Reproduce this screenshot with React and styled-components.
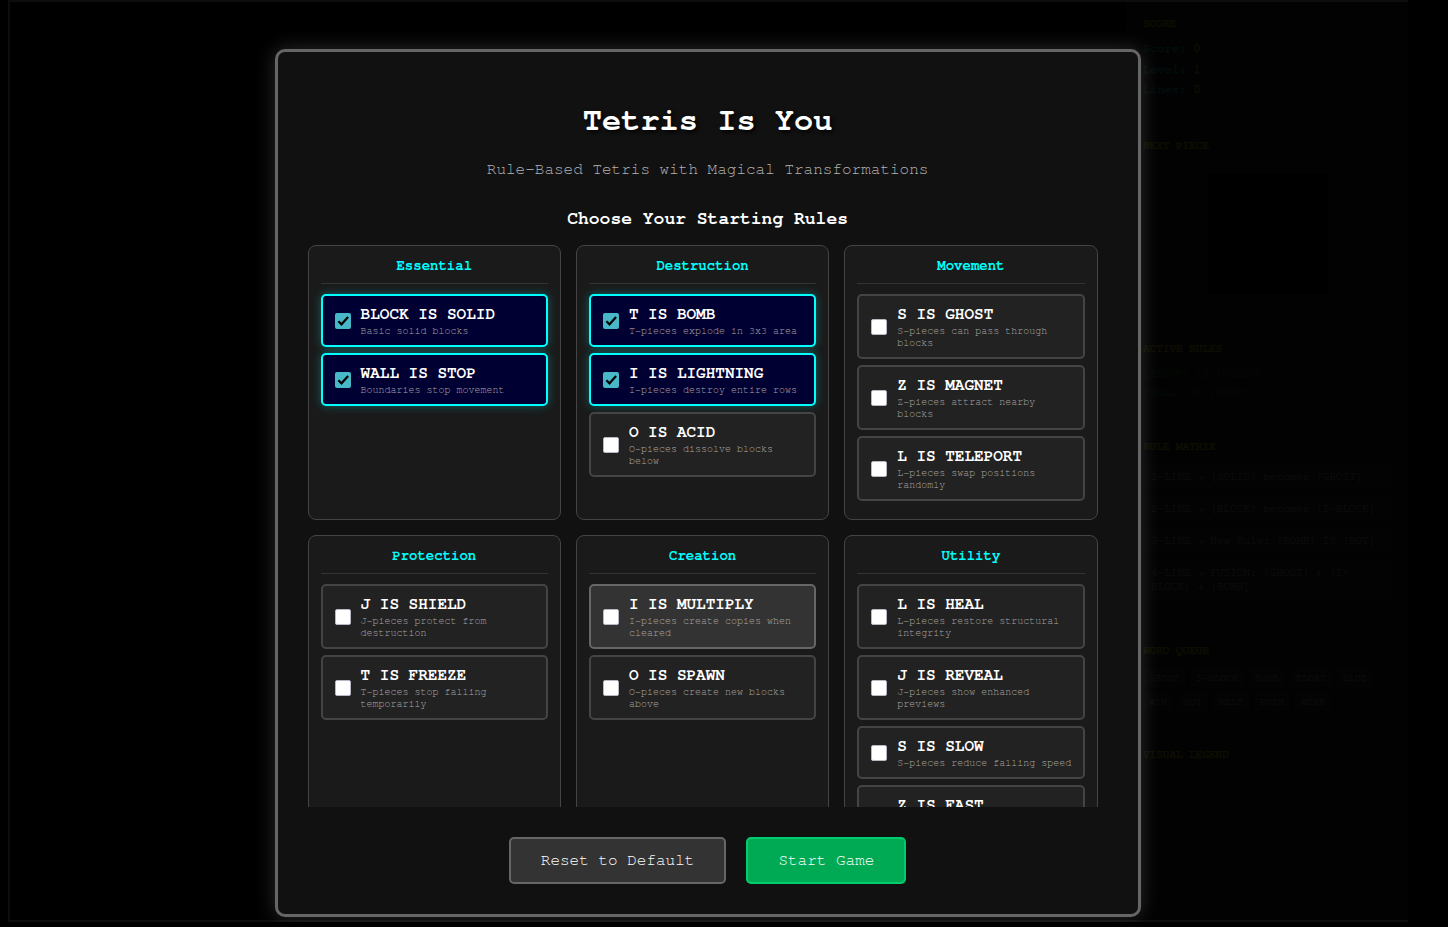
import React, { useState } from 'react';
import styled, { createGlobalStyle } from 'styled-components';

const GlobalStyle = createGlobalStyle`
  * { box-sizing: border-box; }
  body {
    margin: 0 8px;
    background: #000;
    color: #fff;
    font-family: 'TeX Gyre Cursor', FreeMono, 'Courier New', 'Liberation Mono', monospace;
    overflow: hidden;
  }
`;

const GameFrame = styled.div`
  position: relative;
  display: flex;
  width: 1400px;
  height: 922px;
  border: 2px solid #fff;
  border-right: none;
`;

const Board = styled.main`
  flex: 1;
  background: #000;
`;

const Sidebar = styled.aside`
  width: 282px;
  padding: 15px;
  border-left: 2px solid #333;
  background: #333;
`;

const Section = styled.section`
  height: ${(p) => p.$height}px;
`;

const SectionTitle = styled.h3`
  margin: 0 0 ${(p) => p.$gap || 12}px;
  font-size: 11px;
  line-height: 12px;
  color: #ff0;
`;

const ScoreLine = styled.div`
  font-size: 12px;
  line-height: 20.5px;
  color: #0ff;
  -webkit-text-stroke: 0.3px;
  span { color: #ff0; }
`;

const NextPiece = styled.div`
  width: 120px;
  height: 120px;
  margin: 0 auto;
  background: #000;
`;

const ActiveRule = styled.div`
  font-size: 11px;
  line-height: 19px;
  color: #0f0;
  opacity: 0.8;
`;

const MatrixRule = styled.div`
  margin-bottom: 8px;
  padding: 5px 8px;
  font-size: 11px;
  line-height: 14px;
  color: #fff;
  background: #444;
`;

const Words = styled.div`
  display: flex;
  flex-wrap: wrap;
  gap: 5px;
`;

const Word = styled.span`
  padding: 3px 6px;
  font-size: 10px;
  line-height: 13px;
  color: #fff;
  background: #444;
`;

const Overlay = styled.div`
  position: absolute;
  inset: -2px 0 -7px -2px;
  display: flex;
  justify-content: center;
  align-items: flex-start;
  padding: 49px 0.8px 0 0;
  background: rgba(0, 0, 0, 0.95);
`;

const Dialog = styled.div`
  width: 866px;
  height: 868px;
  padding: 30px;
  border: 3px solid #666;
  border-radius: 10px;
  background: #111;
  box-shadow: 0 0 20px rgba(255, 255, 255, 0.17);
  text-align: center;
`;

const Title = styled.h1`
  margin: 18.44px 0 23.44px;
  font-size: 32px;
  line-height: 36px;
  text-shadow: 2px 2px 4px #000;
`;

const Subtitle = styled.p`
  margin: 0 0 29px;
  font-size: 16px;
  line-height: 18px;
  color: #b4b4b4;
`;

const Prompt = styled.h2`
  margin: 0 0 17px;
  font-size: 18px;
  line-height: 21px;
`;

const RuleScroller = styled.div`
  height: 562px;
  padding-right: 10px;
  overflow: hidden;
`;

const RuleGrid = styled.div`
  display: grid;
  grid-template-columns: repeat(3, 1fr);
  gap: 15px;
`;

const Category = styled.div`
  padding: 12px;
  border: 1px solid #444;
  border-radius: 8px;
  background: #1a1a1a;
`;

const CategoryTitle = styled.h4`
  margin: 0 0 10px;
  padding-bottom: 11px;
  border-bottom: 1px solid #333;
  font-size: 14px;
  line-height: 14px;
  color: #0ff;
`;

const RuleOption = styled.label`
  display: flex;
  align-items: center;
  gap: 10px;
  margin-bottom: 6px;
  padding: 9px 10px 8px 12px;
  border: 2px solid ${(p) => (p.$on ? '#0ff' : p.$active ? '#666' : '#444')};
  border-radius: 5px;
  background: ${(p) => (p.$on ? '#003' : p.$active ? '#333' : '#222')};
  box-shadow: ${(p) => (p.$on ? '0 0 10px rgba(0, 255, 255, 0.3)' : 'none')};
  text-align: left;
  cursor: pointer;
`;

const Check = styled.input`
  position: absolute;
  opacity: 0;
  pointer-events: none;
`;

const CheckBox = styled.svg`
  flex: none;
  width: 16px;
  height: 16px;
`;

const RuleName = styled.div`
  margin-bottom: 4px;
  font-size: 16px;
  font-weight: bold;
  line-height: 16px;
`;

const RuleText = styled.div`
  font-size: 10px;
  line-height: 12px;
  color: #a8a8a8;
`;

const Actions = styled.div`
  display: flex;
  justify-content: center;
  gap: 20px;
  margin-top: 30px;
`;

const Button = styled.button`
  height: 47px;
  padding: 0 30px 1px;
  border: 2px solid ${(p) => (p.$primary ? '#00cc70' : '#666')};
  border-radius: 5px;
  background: ${(p) => (p.$primary ? '#00aa55' : '#333')};
  color: #fff;
  font-family: inherit;
  font-size: 16px;
  line-height: 18px;
`;

const categories = [
  ['Essential', [
    ['BLOCK IS SOLID', 'Basic solid blocks'],
    ['WALL IS STOP', 'Boundaries stop movement'],
  ]],
  ['Destruction', [
    ['T IS BOMB', 'T-pieces explode in 3x3 area'],
    ['I IS LIGHTNING', 'I-pieces destroy entire rows'],
    ['O IS ACID', 'O-pieces dissolve blocks below'],
  ]],
  ['Movement', [
    ['S IS GHOST', 'S-pieces can pass through blocks'],
    ['Z IS MAGNET', 'Z-pieces attract nearby blocks'],
    ['L IS TELEPORT', 'L-pieces swap positions randomly'],
  ]],
  ['Protection', [
    ['J IS SHIELD', 'J-pieces protect from destruction'],
    ['T IS FREEZE', 'T-pieces stop falling temporarily'],
  ]],
  ['Creation', [
    ['I IS MULTIPLY', 'I-pieces create copies when cleared'],
    ['O IS SPAWN', 'O-pieces create new blocks above'],
  ]],
  ['Utility', [
    ['L IS HEAL', 'L-pieces restore structural integrity'],
    ['J IS REVEAL', 'J-pieces show enhanced previews'],
    ['S IS SLOW', 'S-pieces reduce falling speed'],
    ['Z IS FAST', 'Z-pieces increase falling speed'],
  ]],
];

const defaults = ['BLOCK IS SOLID', 'WALL IS STOP', 'T IS BOMB', 'I IS LIGHTNING'];

const matrix = [
  '1-LINE → [SOLID] becomes [GHOST]',
  '2-LINE → [BLOCK] becomes [I-BLOCK]',
  '3-LINE → New Rule: [BOMB] IS [HOT]',
  '4-LINE → FUSION: [GHOST] + [I-BLOCK] + [BOMB]',
];

const words = ['GHOST', 'I-BLOCK', 'BOMB', 'FLOAT', 'BLUE', 'WIN', 'HOT', 'MELT', 'PUSH', 'WEAK'];

function RuleCheck({ on, onToggle }) {
  return (
    <>
      <Check type="checkbox" checked={on} onChange={onToggle} />
      <CheckBox viewBox="0 0 16 16">
        {on ? (
          <>
            <rect width="16" height="16" rx="2" fill="#48b8c8" />
            <path d="M3.4 8.2 6.5 11.3 13.1 4.1" fill="none" stroke="#000" strokeWidth="2.2" />
          </>
        ) : (
          <rect x="0.5" y="0.5" width="15" height="15" rx="1.5" fill="#fff" stroke="#b9b6c6" />
        )}
      </CheckBox>
    </>
  );
}

export default function App() {
  const [selected, setSelected] = useState(defaults);
  const toggle = (name) =>
    setSelected((list) => (list.includes(name) ? list.filter((n) => n !== name) : [...list, name]));

  return (
    <>
      <GlobalStyle />
      <GameFrame>
        <Board />
        <Sidebar>
          <Section $height={122}>
            <SectionTitle $gap={9}>SCORE</SectionTitle>
            <ScoreLine>Score: <span>0</span></ScoreLine>
            <ScoreLine>Level: <span>1</span></ScoreLine>
            <ScoreLine>Lines: <span>0</span></ScoreLine>
          </Section>
          <Section $height={203}>
            <SectionTitle $gap={23}>NEXT PIECE</SectionTitle>
            <NextPiece />
          </Section>
          <Section $height={98}>
            <SectionTitle $gap={10}>ACTIVE RULES</SectionTitle>
            <ActiveRule>[BLOCK] IS [SOLID]</ActiveRule>
            <ActiveRule>[WALL] IS [STOP]</ActiveRule>
          </Section>
          <Section $height={204}>
            <SectionTitle $gap={13}>RULE MATRIX</SectionTitle>
            {matrix.map((rule) => <MatrixRule key={rule}>{rule}</MatrixRule>)}
          </Section>
          <Section $height={104}>
            <SectionTitle>WORD QUEUE</SectionTitle>
            <Words>{words.map((word) => <Word key={word}>{word}</Word>)}</Words>
          </Section>
          <Section $height={60}>
            <SectionTitle>VISUAL LEGEND</SectionTitle>
          </Section>
        </Sidebar>
        <Overlay>
          <Dialog>
            <Title>Tetris Is You</Title>
            <Subtitle>Rule-Based Tetris with Magical Transformations</Subtitle>
            <Prompt>Choose Your Starting Rules</Prompt>
            <RuleScroller>
              <RuleGrid>
                {categories.map(([category, rules]) => (
                  <Category key={category}>
                    <CategoryTitle>{category}</CategoryTitle>
                    {rules.map(([name, text]) => (
                      <RuleOption key={name} $on={selected.includes(name)} $active={name === 'I IS MULTIPLY'}>
                        <RuleCheck on={selected.includes(name)} onToggle={() => toggle(name)} />
                        <div>
                          <RuleName>{name}</RuleName>
                          <RuleText>{text}</RuleText>
                        </div>
                      </RuleOption>
                    ))}
                  </Category>
                ))}
              </RuleGrid>
            </RuleScroller>
            <Actions>
              <Button onClick={() => setSelected(defaults)}>Reset to Default</Button>
              <Button $primary>Start Game</Button>
            </Actions>
          </Dialog>
        </Overlay>
      </GameFrame>
    </>
  );
}
